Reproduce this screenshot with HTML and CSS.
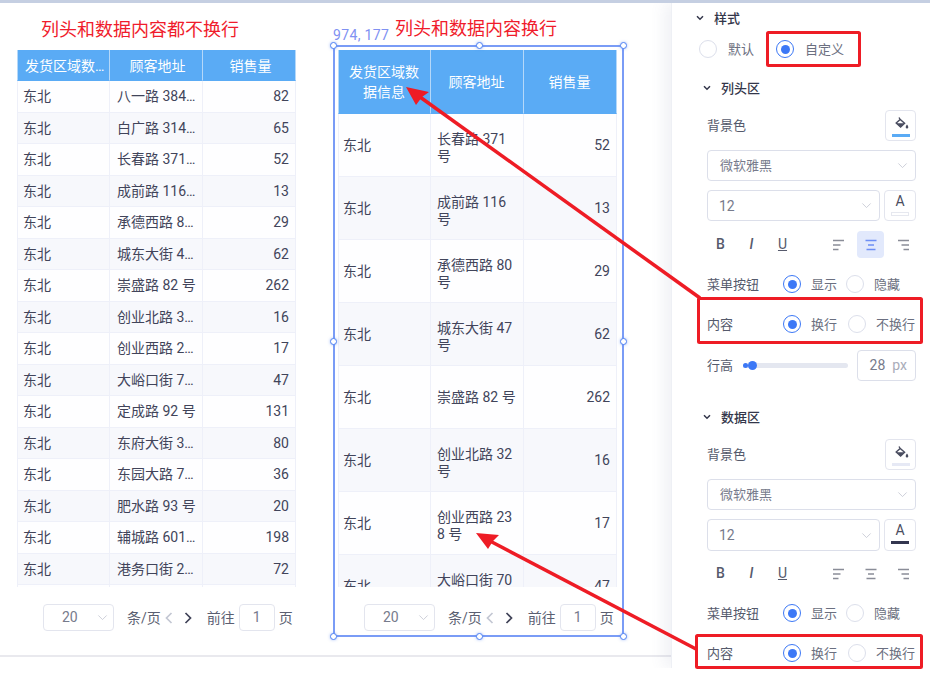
FILE: index.html
```html
<!DOCTYPE html>
<html lang="zh-CN">
<head>
<meta charset="utf-8">
<title>表格样式</title>
<link rel="stylesheet" href="styles.css">
</head>
<body>
<svg class="defs" width="0" height="0">
  <symbol id="chev" viewBox="0 0 16 10"><path d="M2 2l6 6 6-6" fill="none" stroke="currentColor" stroke-width="1.2"/></symbol>
  <symbol id="chev-b" viewBox="0 0 8 6"><path d="M1 1.2l3 3 3-3" fill="none" stroke="currentColor" stroke-width="1.5"/></symbol>
  <symbol id="bucket" viewBox="0 0 16 16"><path d="M6 1.5l1 1.6M3.2 7l4-3.6 4.4 3.8-4 3.9z" fill="none" stroke="#4a4d60" stroke-width="1.4"/><path d="M3.4 7.2h8l-3.9 3.8z" fill="#4a4d60"/><path d="M14 8.5c.9 1.3 1.3 2 1.3 2.7a1.3 1.3 0 0 1-2.6 0c0-.7.4-1.4 1.3-2.7z" fill="#4a4d60"/></symbol>
  <symbol id="al" viewBox="0 0 12 12"><path d="M0 1.5h11M0 6h7.5M0 10.5h5.5" fill="none" stroke="currentColor" stroke-width="1.4"/></symbol>
  <symbol id="ac" viewBox="0 0 12 12"><path d="M.5 1.5h11M3 6h6M1.5 10.5h9" fill="none" stroke="currentColor" stroke-width="1.4"/></symbol>
  <symbol id="ar" viewBox="0 0 12 12"><path d="M1 1.5h11M4.500 6h7.500M6.500 10.500h5.500" fill="none" stroke="currentColor" stroke-width="1.4"/></symbol>
</svg>
<div class="topbar"></div>
<main class="workspace">
  <section class="canvas">
    <h2 class="title title-a">列头和数据内容都不换行</h2>
    <h2 class="title title-b">列头和数据内容换行</h2>
    <span class="coords">974, 177</span>

    <div class="widget widget-a">
      <div class="tbl nowrap">
        <div class="row head"><div class="c">发货区域数据信息</div><div class="c">顾客地址</div><div class="c">销售量</div></div>
        <div class="row"><div class="c">东北</div><div class="c">八一路 384 号</div><div class="c num">82</div></div>
        <div class="row alt"><div class="c">东北</div><div class="c">白广路 314 号</div><div class="c num">65</div></div>
        <div class="row"><div class="c">东北</div><div class="c">长春路 371 号</div><div class="c num">52</div></div>
        <div class="row alt"><div class="c">东北</div><div class="c">成前路 116 号</div><div class="c num">13</div></div>
        <div class="row"><div class="c">东北</div><div class="c">承德西路 80 号</div><div class="c num">29</div></div>
        <div class="row alt"><div class="c">东北</div><div class="c">城东大街 47 号</div><div class="c num">62</div></div>
        <div class="row"><div class="c">东北</div><div class="c">崇盛路 82 号</div><div class="c num">262</div></div>
        <div class="row alt"><div class="c">东北</div><div class="c">创业北路 32 号</div><div class="c num">16</div></div>
        <div class="row"><div class="c">东北</div><div class="c">创业西路 238 号</div><div class="c num">17</div></div>
        <div class="row alt"><div class="c">东北</div><div class="c">大峪口街 70 号</div><div class="c num">47</div></div>
        <div class="row"><div class="c">东北</div><div class="c">定成路 92 号</div><div class="c num">131</div></div>
        <div class="row alt"><div class="c">东北</div><div class="c">东府大街 35 号</div><div class="c num">80</div></div>
        <div class="row"><div class="c">东北</div><div class="c">东园大路 72 号</div><div class="c num">36</div></div>
        <div class="row alt"><div class="c">东北</div><div class="c">肥水路 93 号</div><div class="c num">20</div></div>
        <div class="row"><div class="c">东北</div><div class="c">辅城路 601 号</div><div class="c num">198</div></div>
        <div class="row alt"><div class="c">东北</div><div class="c">港务口街 26 号</div><div class="c num">72</div></div>
        <div class="row"><div class="c">东北</div><div class="c">广安路 18 号</div><div class="c num">40</div></div>
      </div>
      <div class="pager">
        <div class="pg-select"><span>20</span><svg class="chev"><use href="#chev"/></svg></div>
        <span class="pg-size">条/页</span>
        <svg class="pg-arrow off" viewBox="0 0 8 12"><path d="M6.500 1L1.500 6l5 5" fill="none" stroke="currentColor" stroke-width="1.700"/></svg>
        <svg class="pg-arrow" viewBox="0 0 8 12"><path d="M1.500 1l5 5-5 5" fill="none" stroke="currentColor" stroke-width="1.700"/></svg>
        <span class="pg-go">前往</span>
        <div class="pg-input"><span>1</span></div>
        <span class="pg-unit">页</span>
      </div>
    </div>

    <div class="widget widget-b">
      <div class="tbl wrap">
        <div class="row head"><div class="c">发货区域数据信息</div><div class="c">顾客地址</div><div class="c">销售量</div></div>
        <div class="row"><div class="c">东北</div><div class="c two">长春路 371 号</div><div class="c num">52</div></div>
        <div class="row alt"><div class="c">东北</div><div class="c two">成前路 116 号</div><div class="c num">13</div></div>
        <div class="row"><div class="c">东北</div><div class="c two">承德西路 80 号</div><div class="c num">29</div></div>
        <div class="row alt"><div class="c">东北</div><div class="c two">城东大街 47 号</div><div class="c num">62</div></div>
        <div class="row"><div class="c">东北</div><div class="c">崇盛路 82 号</div><div class="c num">262</div></div>
        <div class="row alt"><div class="c">东北</div><div class="c two">创业北路 32 号</div><div class="c num">16</div></div>
        <div class="row"><div class="c">东北</div><div class="c two">创业西路 238 号</div><div class="c num">17</div></div>
        <div class="row alt"><div class="c">东北</div><div class="c two">大峪口街 70 号</div><div class="c num">47</div></div>
      </div>
      <div class="pager">
        <div class="pg-select"><span>20</span><svg class="chev"><use href="#chev"/></svg></div>
        <span class="pg-size">条/页</span>
        <svg class="pg-arrow off" viewBox="0 0 8 12"><path d="M6.500 1L1.500 6l5 5" fill="none" stroke="currentColor" stroke-width="1.700"/></svg>
        <svg class="pg-arrow" viewBox="0 0 8 12"><path d="M1.500 1l5 5-5 5" fill="none" stroke="currentColor" stroke-width="1.700"/></svg>
        <span class="pg-go">前往</span>
        <div class="pg-input"><span>1</span></div>
        <span class="pg-unit">页</span>
      </div>
    </div>

    <div class="selection">
      <i class="h h-tl"></i><i class="h h-tc"></i><i class="h h-tr"></i>
      <i class="h h-ml"></i><i class="h h-mr"></i>
      <i class="h h-bl"></i><i class="h h-bc"></i><i class="h h-br"></i>
    </div>
    <div class="baseline"></div>
  </section>

  <aside class="panel">
    <div class="sec-head top"><svg class="chev-b"><use href="#chev-b"/></svg>样式</div>
    <div class="style-radios">
      <span class="radio"></span><span class="rl">默认</span>
      <span class="radio on second"></span><span class="rl">自定义</span>
    </div>

    <div class="sec-head sub m19"><svg class="chev-b"><use href="#chev-b"/></svg>列头区</div>
    <div class="line-bg m12"><span class="lbl">背景色</span>
      <button class="icon-btn"><svg class="bucket"><use href="#bucket"/></svg><i class="swatch blue"></i></button>
    </div>
    <div class="select wide m9"><span>微软雅黑</span><svg class="chev"><use href="#chev"/></svg></div>
    <div class="font-row m9">
      <div class="select"><span>12</span><svg class="chev"><use href="#chev"/></svg></div>
      <button class="icon-btn a-btn"><span>A</span><i class="swatch hollow"></i></button>
    </div>
    <div class="fmt m10">
      <b class="f">B</b><i class="f">I</i><u class="f">U</u>
      <span class="aligns">
        <span class="al"><svg><use href="#al"/></svg></span>
        <span class="al active"><svg><use href="#ac"/></svg></span>
        <span class="al"><svg><use href="#ar"/></svg></span>
      </span>
    </div>
    <div class="opt m16"><span class="lbl">菜单按钮</span>
      <span class="radio on"></span><span class="rl">显示</span>
      <span class="radio gap9"></span><span class="rl">隐藏</span>
    </div>
    <div class="opt m20"><span class="lbl">内容</span>
      <span class="radio on"></span><span class="rl">换行</span>
      <span class="radio gap11"></span><span class="rl">不换行</span>
    </div>
    <div class="height-row m16"><span class="lbl">行高</span>
      <div class="slider"><i class="stub"></i><i class="thumb"></i></div>
      <div class="px"><span>28</span><em>px</em></div>
    </div>

    <div class="sec-head sub m26"><svg class="chev-b"><use href="#chev-b"/></svg>数据区</div>
    <div class="line-bg m12"><span class="lbl">背景色</span>
      <button class="icon-btn"><svg class="bucket"><use href="#bucket"/></svg><i class="swatch pale"></i></button>
    </div>
    <div class="select wide m9"><span>微软雅黑</span><svg class="chev"><use href="#chev"/></svg></div>
    <div class="font-row tall m9">
      <div class="select"><span>12</span><svg class="chev"><use href="#chev"/></svg></div>
      <button class="icon-btn a-btn"><span>A</span><i class="swatch dark"></i></button>
    </div>
    <div class="fmt m9">
      <b class="f">B</b><i class="f">I</i><u class="f">U</u>
      <span class="aligns">
        <span class="al"><svg><use href="#al"/></svg></span>
        <span class="al"><svg><use href="#ac"/></svg></span>
        <span class="al"><svg><use href="#ar"/></svg></span>
      </span>
    </div>
    <div class="opt m16"><span class="lbl">菜单按钮</span>
      <span class="radio on"></span><span class="rl">显示</span>
      <span class="radio gap9"></span><span class="rl">隐藏</span>
    </div>
    <div class="opt m20"><span class="lbl">内容</span>
      <span class="radio on"></span><span class="rl">换行</span>
      <span class="radio gap11"></span><span class="rl">不换行</span>
    </div>
  </aside>
</main>

<svg class="marks" viewBox="0 0 930 680" width="930" height="680">
  <g fill="none" stroke="#ee1c25" stroke-width="3">
    <rect x="767.500" y="32.500" width="92" height="33" rx="1"/>
    <rect x="698.500" y="298.500" width="223" height="44" rx="1"/>
    <rect x="696.500" y="635.500" width="225" height="32" rx="1"/>
  </g>
  <g fill="none" stroke="#ee1c25" stroke-width="3.500">
    <path d="M700 298L420 97"/>
    <path d="M696 649L490 541"/>
  </g>
  <path d="M406 87l23 5-7 5-6 8z" fill="#ee1c25"/>
  <path d="M476 533l23 2-6 6-5 8z" fill="#ee1c25"/>
</svg>
</body>
</html>
```

FILE: styles.css
```css
* { box-sizing: border-box; }
html, body { margin: 0; padding: 0; background: #fff; }
body {
  width: 930px;
  height: 680px;
  overflow: hidden;
  position: relative;
  font-family: Roboto, "Noto Sans CJK SC", sans-serif;
  font-size: 14px;
  color: #41445a;
}
.defs { position: absolute; }
.topbar { height: 3px; background: #c5cfe2; }
.workspace { display: flex; height: 665px; overflow: hidden; }

/* free canvas */
.canvas { position: relative; width: 671px; flex: none; }
.title { position: absolute; margin: 0; font-size: 18px; font-weight: 400; line-height: 24px; color: #f01c2c; }
.title-a { left: 41px; top: 15px; }
.title-b { left: 395px; top: 14px; }
.coords { position: absolute; left: 333px; top: 23px; font-size: 14px; line-height: 18px; color: #8091f2; letter-spacing: .35px; }
.widget { position: absolute; top: 47px; width: 279px; }
.widget-a { left: 17px; }
.widget-b { left: 338px; }

.tbl { height: 537px; overflow: hidden; }
.row { display: grid; grid-template-columns: 93px 93px 93px; background: #fefeff; }
.row.alt { background: #f7f8fc; }
.c {
  padding: 0 4px 0 7px;
  border-right: 1px solid #eef0f9;
  border-bottom: 1px solid #eef0f9;
  display: flex;
  align-items: center;
  min-width: 0;
}
.c:first-child { padding-left: 5px; border-left: 1px solid #eef0f9; }
.num { justify-content: flex-end; padding-right: 6px; }
.head { background: #5aabf5; color: #fff; }
.head .c { justify-content: center; text-align: center; border-color: #b5d8f9; border-bottom-color: #5aabf5; }
.head .c:first-child { padding-left: 7px; }

.nowrap .row { height: 31.47px; }
.nowrap .c { display: block; line-height: 31px; white-space: nowrap; overflow: hidden; text-overflow: ellipsis; }
.nowrap .num { text-align: right; }
.nowrap .head .c { text-align: center; line-height: 32px; }

.wrap .row { height: 63px; }
.wrap .row.head { height: 63.500px; }
.wrap .c { word-break: break-all; line-height: 17px; padding-top: 2px; padding-left: 6px; }
.wrap .c:first-child { padding-left: 4px; }
.wrap .c.two { padding-top: 6px; }
.wrap .head .c { line-height: 20px; padding: 2px 6px 0 5px; }

.pager { display: flex; align-items: center; height: 27px; margin-top: 17px; padding-left: 26px; color: #5b5f72; }
.pg-select, .pg-input {
  height: 27px;
  border: 1px solid #e3e5ee;
  border-radius: 4px;
  background: #fff;
  display: flex;
  align-items: center;
}
.pg-select { width: 71px; padding-left: 18px; color: #777b8c; justify-content: space-between; padding-right: 5px; }
.pg-select span, .pg-input span, .pg-size, .pg-go, .pg-unit { padding-bottom: 2px; }
.pg-size { margin-left: 13px; }
.pg-arrow { width: 8px; height: 12px; margin-left: 4px; color: #3f4257; }
.pg-arrow.off { color: #c3c7d3; }
.pg-arrow + .pg-arrow { margin-left: 11px; }
.pg-go { margin-left: 15px; }
.pg-input { width: 36px; margin: 0 4px; justify-content: center; color: #777b8c; }
.chev { width: 11px; height: 7px; color: #c3c6d2; flex: none; }

/* selection frame */
.selection {
  position: absolute;
  left: 333px;
  top: 42px;
  width: 291px;
  height: 592px;
  border: 2px solid #7a9cf6;
}
.h {
  position: absolute;
  width: 7px;
  height: 7px;
  border: 1.500px solid #4f82f3;
  border-radius: 50%;
  background: #fff;
  box-shadow: 0 0 3px rgba(79, 130, 243, .5);
}
.h-tl { left: -5px; top: -5px; }
.h-tc { left: 141px; top: -5px; }
.h-tr { right: -5px; top: -5px; }
.h-ml { left: -5px; top: 291px; }
.h-mr { right: -5px; top: 291px; }
.h-bl { left: -5px; bottom: -5px; }
.h-bc { left: 141px; bottom: -5px; }
.h-br { right: -5px; bottom: -5px; }
.baseline { position: absolute; left: 0; right: 0; top: 652px; height: 2px; background: #e9e9ee; }

/* settings panel */
.panel {
  width: 259px;
  flex: none;
  height: 665px;
  padding: 5px 14px 0 35px;
  background: #fff;
  border-left: 1px solid #eef0f5;
  box-shadow: -7px 0 14px rgba(90, 100, 140, .09);
  position: relative;
  font-size: 13px;
  color: #555a6c;
}
.sec-head { display: flex; align-items: center; height: 20px; padding-bottom: 2px; font-size: 13px; font-weight: 500; color: #33364a; }
.sec-head.top { margin-left: -8px; }
.sec-head.sub { margin-left: -1px; }
.chev-b { width: 8px; height: 6px; color: #33364a; margin: 2px 10px 0 -3px; flex: none; }
.m9 { margin-top: 9px; }
.m10 { margin-top: 10px; }
.m12 { margin-top: 12px; }
.m16 { margin-top: 16px; }
.m19 { margin-top: 19px; }
.m20 { margin-top: 20px; }
.m26 { margin-top: 26px; }

.style-radios { display: flex; align-items: center; height: 20px; margin: 11px 0 0 -8px; color: #777b8c; }
.radio { width: 18px; height: 18px; flex: none; border: 1px solid #dcdfeb; border-radius: 50%; background: #fff; position: relative; }
.radio.on { border-color: #3c78f6; }
.radio.on::after { content: ""; position: absolute; left: 3.500px; top: 3.500px; width: 9px; height: 9px; border-radius: 50%; background: #3c78f6; }
.rl { margin-left: 10px; padding-bottom: 2px; white-space: nowrap; color: #6b6f80; }
.style-radios .rl { margin-left: 11px; }
.radio.second { margin-left: 22px; }
.gap9 { margin-left: 9px; }
.gap11 { margin-left: 11px; }

.line-bg { display: flex; align-items: center; justify-content: space-between; height: 31px; }
.lbl { color: #555a6c; padding-bottom: 2px; }
.icon-btn {
  width: 31px;
  height: 31px;
  padding: 0;
  border: 1px solid #e3e5ee;
  border-radius: 4px;
  background: #fff;
  position: relative;
  display: flex;
  flex-direction: column;
  align-items: center;
  font: inherit;
  color: #4a4d60;
}
.bucket { width: 16px; height: 16px; margin-top: 5px; }
.swatch { display: block; width: 18px; height: 3px; margin-top: 2px; }
.swatch.blue { background: #5aabf5; }
.swatch.pale { background: #e6e9f5; }
.swatch.hollow { border: 1px solid #e6e8ef; height: 4px; background: #fff; margin-top: 0; }
.swatch.dark { background: #33364f; margin-top: 0; }

.select {
  height: 31px;
  border: 1px solid #dcdfea;
  border-radius: 4px;
  display: flex;
  align-items: center;
  justify-content: space-between;
  padding: 0 7px 0 12px;
  color: #777b8c;
  font-size: 13px;
  flex: 1;
}
.select span { padding-bottom: 3px; }
.select.wide { width: 209px; flex: none; }
.font-row { display: flex; gap: 4px; height: 31px; }
.font-row.tall { height: 32px; }
.font-row .select { height: 100%; font-size: 14px; padding-left: 11px; }
.font-row .select span { padding-bottom: 0; }
.a-btn { width: 32px; height: 100%; flex: none; line-height: 16px; font-size: 14px; }
.a-btn span { margin-top: 2px; height: 19px; }

.fmt { display: flex; align-items: center; height: 27px; color: #565a6c; }
.f { width: 11px; margin-left: 8px; text-align: center; font-size: 14px; padding-bottom: 1px; }
b.f { font-weight: 500; }
.f + .f { margin-left: 20px; }
i.f { font-weight: 500; }
.aligns { display: flex; margin-left: auto; }
.al { width: 27px; height: 27px; border-radius: 4px; display: flex; align-items: center; justify-content: center; color: #8a8d98; margin-left: 5px; }
.al:first-child { margin-left: 0; }
.al svg { width: 12px; height: 12px; }
.al.active { background: #e2e9fc; color: #6d8ef5; }

.opt { display: flex; align-items: center; height: 20px; }
.opt .lbl { width: 76px; flex: none; }

.height-row { display: flex; align-items: center; height: 31px; }
.height-row .lbl { width: 36px; flex: none; }
.slider { width: 105px; height: 5px; border-radius: 3px; background: #e4e7f0; position: relative; flex: none; }
.stub { position: absolute; left: 0; top: 0; width: 5px; height: 5px; border-radius: 50%; background: #3c78f6; }
.thumb { position: absolute; left: 5px; top: -2px; width: 9px; height: 9px; border-radius: 50%; background: #3c78f6; }
.px { margin-left: 9px; width: 59px; height: 31px; border: 1px solid #dcdfea; border-radius: 4px; display: flex; align-items: center; justify-content: flex-end; padding-right: 8px; font-size: 14px; color: #777b8c; gap: 7px; }
.px span, .px em { padding-bottom: 2px; }
.px em { font-style: normal; color: #a9acb9; }

/* review annotations on top of the screenshot */
.marks { position: absolute; left: 0; top: 0; pointer-events: none; }
```
